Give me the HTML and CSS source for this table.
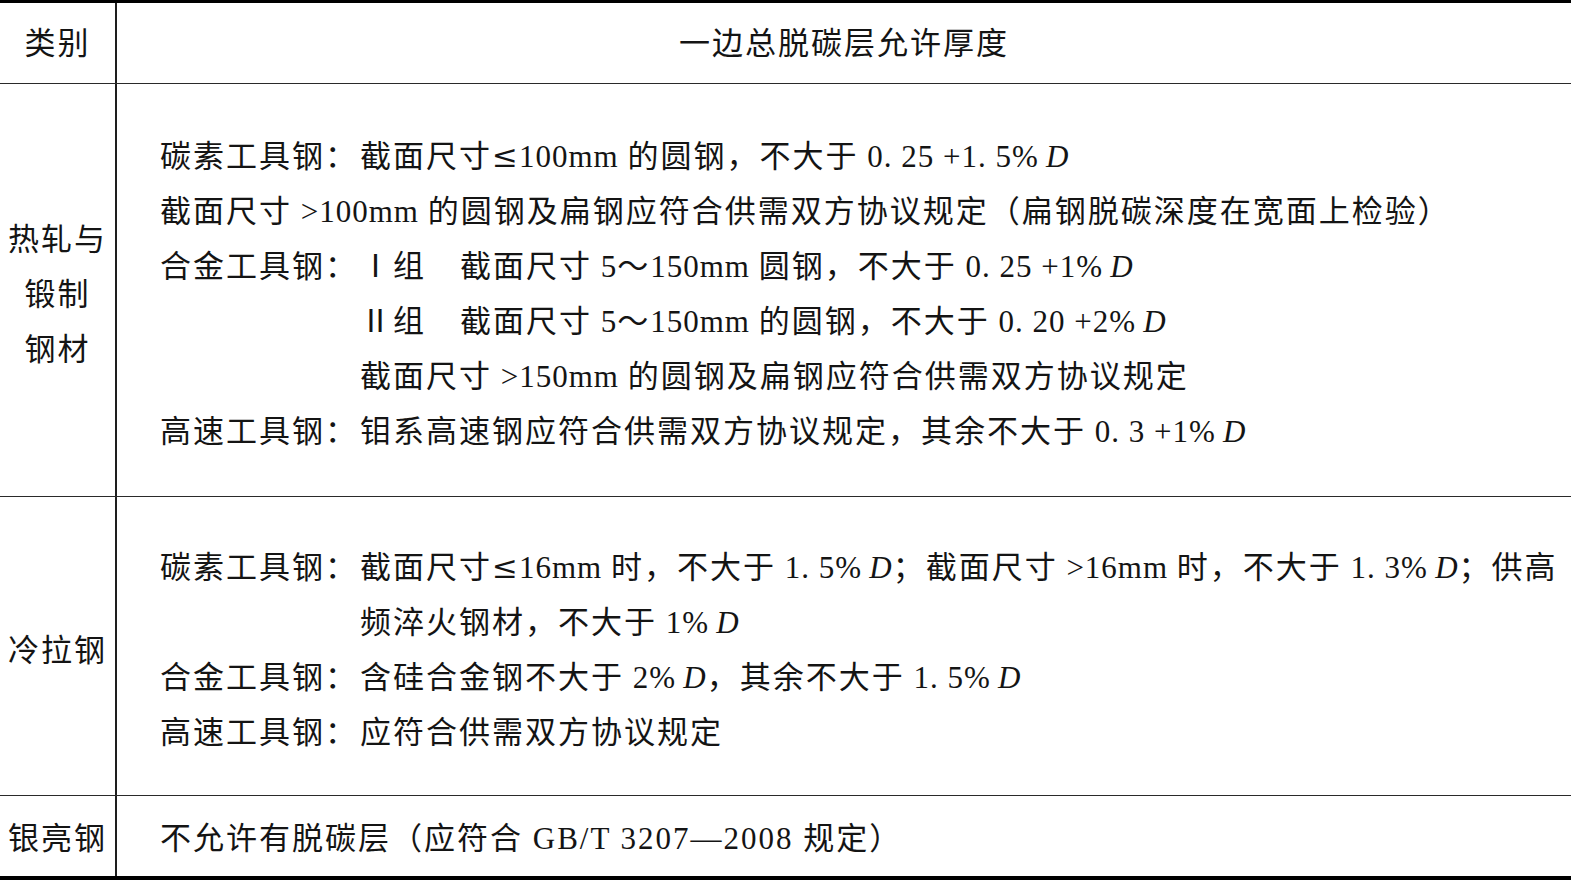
FILE: index.html
```html
<!DOCTYPE html>
<html lang="zh-CN">
<head>
<meta charset="utf-8">
<title>一边总脱碳层允许厚度</title>
<link rel="stylesheet" href="styles.css">
</head>
<body>
<div class="spec">
  <div class="row head">
    <div class="cat">类别</div>
    <div class="desc center">一边总脱碳层允许厚度</div>
  </div>
  <div class="row hot">
    <div class="cat">热轧与<br>锻制<br>钢材</div>
    <div class="desc">
      <div class="ln"><span class="lab">碳素工具钢：</span><span>截面尺寸<span class="le">≤</span><span class="n">100mm </span>的圆钢，不大于<span class="n"> 0. 25 +1. 5%&#8201;<i>D</i></span></span></div>
      <div class="ln"><span>截面尺寸<span class="n"> &gt;100mm </span>的圆钢及扁钢应符合供需双方协议规定（扁钢脱碳深度在宽面上检验）</span></div>
      <div class="ln"><span class="lab">合金工具钢：</span><span class="grp">Ⅰ组</span><span>截面尺寸<span class="n"> 5</span>～<span class="n">150mm </span>圆钢，不大于<span class="n"> 0. 25 +1%&#8201;<i>D</i></span></span></div>
      <div class="ln"><span class="lab"></span><span class="grp">Ⅱ组</span><span>截面尺寸<span class="n"> 5</span>～<span class="n">150mm </span>的圆钢，不大于<span class="n"> 0. 20 +2%&#8201;<i>D</i></span></span></div>
      <div class="ln"><span class="lab"></span><span>截面尺寸<span class="n"> &gt;150mm </span>的圆钢及扁钢应符合供需双方协议规定</span></div>
      <div class="ln"><span class="lab">高速工具钢：</span><span>钼系高速钢应符合供需双方协议规定，其余不大于<span class="n"> 0. 3 +1%&#8201;<i>D</i></span></span></div>
    </div>
  </div>
  <div class="row cold">
    <div class="cat">冷拉钢</div>
    <div class="desc">
      <div class="ln"><span class="lab">碳素工具钢：</span><span>截面尺寸<span class="le">≤</span><span class="n">16mm </span>时，不大于<span class="n"> 1. 5%&#8201;<i>D</i></span>；截面尺寸<span class="n"> &gt;16mm </span>时，不大于<span class="n"> 1. 3%&#8201;<i>D</i></span>；供高</span></div>
      <div class="ln"><span class="lab"></span><span>频淬火钢材，不大于<span class="n"> 1%&#8201;<i>D</i></span></span></div>
      <div class="ln"><span class="lab">合金工具钢：</span><span>含硅合金钢不大于<span class="n"> 2%&#8201;<i>D</i></span>，其余不大于<span class="n"> 1. 5%&#8201;<i>D</i></span></span></div>
      <div class="ln"><span class="lab">高速工具钢：</span><span>应符合供需双方协议规定</span></div>
    </div>
  </div>
  <div class="row bright">
    <div class="cat">银亮钢</div>
    <div class="desc">
      <div class="ln"><span>不允许有脱碳层（应符合<span class="n std"> GB/T 3207—2008 </span>规定）</span></div>
    </div>
  </div>
</div>
</body>
</html>
```

FILE: styles.css
```css
html, body {
  margin: 0;
  padding: 0;
  background: #fff;
}

body {
  width: 1571px;
  height: 881px;
  overflow: hidden;
  font-family: "Liberation Serif", "Noto Sans CJK SC", serif;
  font-size: 31px;
  letter-spacing: 2px;
  color: #141414;
}

.spec {
  width: 1571px;
  border-top: 3px solid #000;
  border-bottom: 4px solid #000;
}

.row {
  display: flex;
  border-bottom: 1px solid #2a2a2a;
}

.row:last-child {
  border-bottom: none;
}

.head { height: 80px; }
.hot { height: 412px; }
.cold { height: 298px; }
.bright { height: 80px; }

.cat {
  width: 117px;
  flex: none;
  box-sizing: border-box;
  border-right: 2px solid #1e1e1e;
  display: flex;
  align-items: center;
  justify-content: center;
  text-align: center;
  line-height: 55px;
  padding-top: 8px;
}

.desc {
  flex: 1;
  display: flex;
  flex-direction: column;
  justify-content: center;
  padding-left: 43px;
  padding-top: 7px;
  line-height: 55px;
  white-space: nowrap;
}

.head .cat,
.head .desc {
  padding-top: 0;
}

.bright .cat,
.bright .desc {
  padding-top: 4px;
}

.desc.center {
  align-items: center;
  padding-left: 0;
}

.ln {
  display: flex;
}

.lab {
  width: 200px;
  flex: none;
}

.grp {
  width: 100px;
  flex: none;
}

.n {
  letter-spacing: 1px;
}

.n.std {
  letter-spacing: 2px;
}

.le {
  font-family: "DejaVu Serif", "Liberation Serif", serif;
  letter-spacing: 1px;
}

i {
  font-style: italic;
}
```
